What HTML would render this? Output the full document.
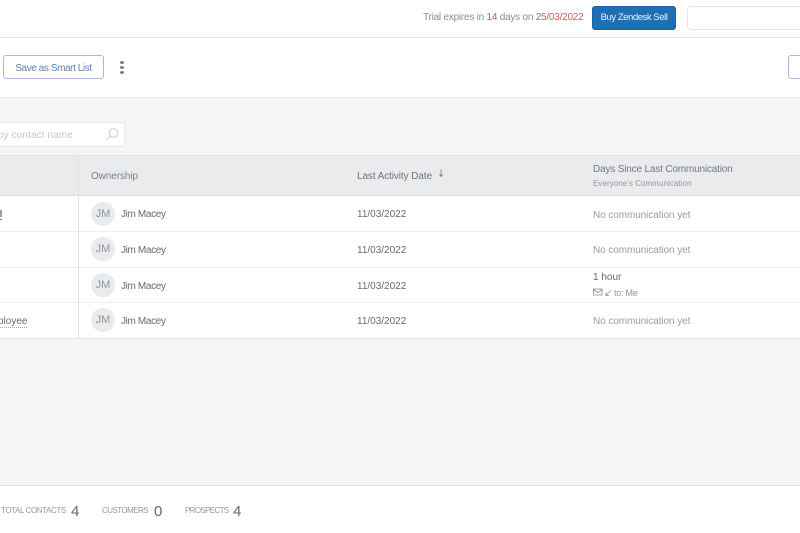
<!DOCTYPE html>
<html><head><meta charset="utf-8"><style>
html,body{margin:0;padding:0;width:800px;height:533px;overflow:hidden;background:#f4f5f7}
body{position:relative;font-family:"Liberation Sans",sans-serif;filter:blur(.3px)}
.a{position:absolute;white-space:nowrap;line-height:14px}
.box{position:absolute;box-sizing:border-box}
.t{font-size:10px;letter-spacing:0;color:#666b70}
.n{letter-spacing:-.35px}
.g{font-size:10px;letter-spacing:-.08px;color:#999da2}
.av{position:absolute;left:91px;width:24px;height:24px;border-radius:50%;background:#e9ebed;color:#92969b;font-size:11px;line-height:25px;text-align:center}
.l{font-size:8px;color:#94989d}
.d{font-size:15px;color:#63686d}
</style></head><body>
<div class="box" style="left:0;top:0;width:800px;height:38px;background:#fff;border-bottom:1px solid #e3e5e8"></div>
<div class="a" style="left:423px;top:11px;font-size:10px;letter-spacing:-.23px;color:#8a8e93">Trial expires in <span style="color:#c0605c">14</span> days on <span style="color:#c9605c">25/03/2022</span></div>
<div class="box" style="left:592px;top:6px;width:84px;height:24px;background:#1f6fb5;border:1px solid #1a64a6;border-radius:3px;color:#e8f1f8;font-size:9.5px;letter-spacing:-.45px;line-height:21px;text-align:center">Buy Zendesk Sell</div>
<div class="box" style="left:687px;top:6px;width:120px;height:24px;background:#fff;border:1px solid #e3e5e8;border-radius:4px"></div>

<div class="box" style="left:0;top:38px;width:800px;height:60px;background:#fff;border-bottom:1px solid #e6e8ea"></div>
<div class="box" style="left:3px;top:55px;width:101px;height:24px;background:#fff;border:1px solid #a3bcd8;border-radius:3px;color:#5c83ae;font-size:10px;letter-spacing:-.42px;line-height:25px;text-align:center">Save as Smart List</div>
<div class="box" style="left:120px;top:61px;width:4px;height:3px;border-radius:50%;background:#7a7e83"></div>
<div class="box" style="left:120px;top:66px;width:4px;height:3px;border-radius:50%;background:#7a7e83"></div>
<div class="box" style="left:120px;top:71px;width:4px;height:3px;border-radius:50%;background:#7a7e83"></div>
<div class="box" style="left:788px;top:55px;width:20px;height:24px;background:#fff;border:1px solid #a3bcd8;border-radius:3px"></div>

<div class="box" style="left:-10px;top:122px;width:135px;height:25px;background:#fff;border:1px solid #e6e8ea;border-radius:3px"></div>
<div class="a" style="left:-2px;top:129px;font-size:10px;letter-spacing:.1px;color:#c3c6c9">by contact name</div>
<svg class="box" style="left:104px;top:126px" width="16" height="16" viewBox="0 0 16 16" fill="none" stroke="#c9cccf" stroke-width="1"><circle cx="9.5" cy="7" r="4.3"/><path d="M6.3 10.2L2.5 14"/></svg>

<div class="box" style="left:0;top:155px;width:800px;height:41px;background:#e9ebed;border-top:1px solid #dfe1e4;border-bottom:1px solid #dcdfe2"></div>
<div class="box" style="left:0;top:196px;width:800px;height:143px;background:#fff;border-bottom:1px solid #e2e4e7"></div>
<div class="box" style="left:0;top:231px;width:800px;height:1px;background:#eceef0"></div>
<div class="box" style="left:0;top:267px;width:800px;height:1px;background:#eceef0"></div>
<div class="box" style="left:0;top:302px;width:800px;height:1px;background:#eceef0"></div>
<div class="box" style="left:78px;top:155px;width:1px;height:184px;background:#dfe1e4"></div>

<div class="a" style="left:91px;top:170px;font-size:10px;letter-spacing:-.1px;color:#7d8287">Ownership</div>
<div class="a" style="left:357px;top:170px;font-size:10px;letter-spacing:-.1px;color:#6f7479">Last Activity Date</div>
<svg class="box" style="left:438px;top:169px" width="6" height="9" viewBox="0 0 6 9" fill="none" stroke="#7d8287" stroke-width=".9"><path d="M3 0.5V7M1.5 5.5L3 7.5L4.5 5.5"/></svg>
<div class="a" style="left:593px;top:163px;font-size:10px;letter-spacing:-.17px;color:#74797e">Days Since Last Communication</div>
<div class="a" style="left:593px;top:177px;font-size:8px;letter-spacing:.06px;color:#94989d">Everyone's Communication</div>

<div class="av" style="top:202px">JM</div><div class="a t n" style="left:121px;top:208px">Jim Macey</div>
<div class="av" style="top:237px">JM</div><div class="a t n" style="left:121px;top:244px">Jim Macey</div>
<div class="av" style="top:273px">JM</div><div class="a t n" style="left:121px;top:280px">Jim Macey</div>
<div class="av" style="top:308px">JM</div><div class="a t n" style="left:121px;top:315px">Jim Macey</div>

<div class="a t" style="left:357px;top:208px">11/03/2022</div>
<div class="a t" style="left:357px;top:244px">11/03/2022</div>
<div class="a t" style="left:357px;top:280px">11/03/2022</div>
<div class="a t" style="left:357px;top:315px">11/03/2022</div>

<div class="a g" style="left:593px;top:209px">No communication yet</div>
<div class="a g" style="left:593px;top:244px">No communication yet</div>
<div class="a t" style="left:593px;top:271px">1 hour</div>
<svg class="box" style="left:593px;top:288px" width="22" height="9" viewBox="0 0 22 9" fill="none" stroke="#8b8f94" stroke-width=".8"><rect x=".5" y="1" width="8.5" height="6" /><path d="M.5 1.5L4.7 4.7L9 1.5M18 2L13 7.5M13 4.5V7.5H16"/></svg>
<div class="a" style="left:614px;top:286px;font-size:9px;letter-spacing:-.25px;color:#94989d">to: Me</div>
<div class="a g" style="left:593px;top:315px">No communication yet</div>

<div class="box" style="left:0;top:210px;width:2px;height:7px;background:#9a9da1"></div>
<div class="box" style="left:0;top:219px;width:2px;height:1px;background:#777"></div>
<div class="a t" style="left:-2px;top:316px;border-bottom:1px dotted #a9adb1;line-height:11px;clip-path:inset(0 0 0 2px)">ployee</div>

<div class="box" style="left:0;top:485px;width:800px;height:48px;background:#fff;border-top:1px solid #dfe1e4"></div>
<div class="a l" style="left:1px;top:504px;letter-spacing:-.4px">TOTAL CONTACTS</div>
<div class="a d" style="left:71px;top:505px">4</div>
<div class="a l" style="left:102px;top:504px;letter-spacing:-.55px">CUSTOMERS</div>
<div class="a d" style="left:154px;top:505px">0</div>
<div class="a l" style="left:185px;top:504px;letter-spacing:-.65px">PROSPECTS</div>
<div class="a d" style="left:233px;top:505px">4</div>
</body></html>
